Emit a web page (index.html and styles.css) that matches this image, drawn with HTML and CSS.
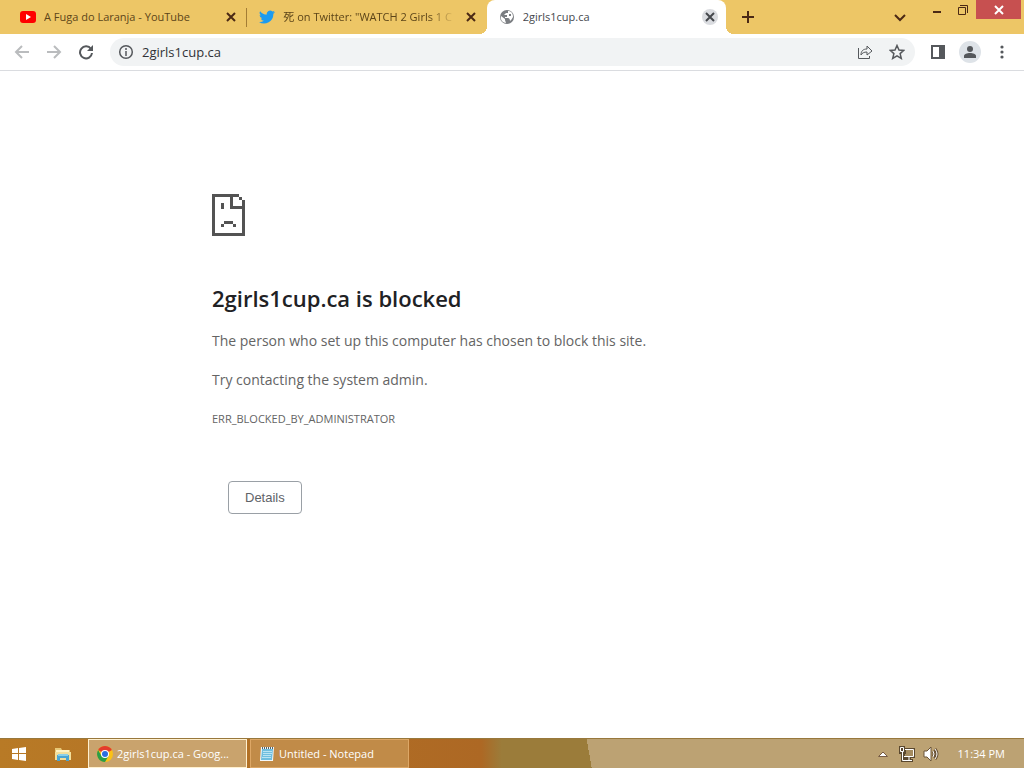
FILE: index.html
```
<!DOCTYPE html>
<html lang="en">
<head>
    <meta charset="UTF-8">
    <meta name="viewport" content="width=device-width, initial-scale=1.0">
    <title>2girls1cup.ca</title>
    <link rel="stylesheet" href="styles.css">
</head>
<body>
    <header class="tabstrip">
        <div class="tabs">
            <div class="tab divided">
                <svg class="favicon" viewBox="0 0 16 16"><rect y="2" width="16" height="12" rx="3" fill="#f00"/><path d="M6 5l5 3-5 3z" fill="#fff"/></svg>
                <span class="tab-title">A Fuga do Laranja - YouTube</span>
                <button class="tab-close" aria-label="Close tab"><svg viewBox="0 0 16 16"><path d="M4 4l8 8M12 4l-8 8"/></svg></button>
            </div>
            <div class="tab">
                <svg class="favicon" viewBox="0 0 24 24"><path fill="#1d9bf0" d="M24 4.6a10 10 0 0 1-2.8.8 5 5 0 0 0 2.1-2.7 10 10 0 0 1-3.100 1.200 4.900 4.900 0 0 0-8.400 4.500A14 14 0 0 1 1.700 3.200a4.900 4.900 0 0 0 1.500 6.500 4.900 4.900 0 0 1-2.200-.6 4.900 4.900 0 0 0 3.900 4.900 5 5 0 0 1-2.200.1 4.900 4.900 0 0 0 4.600 3.400A9.900 9.900 0 0 1 0 19.500 14 14 0 0 0 21.500 7.100 10 10 0 0 0 24 4.600z"/></svg>
                <span class="tab-title fade">死 on Twitter: "WATCH 2 Girls 1 C</span>
                <button class="tab-close" aria-label="Close tab"><svg viewBox="0 0 16 16"><path d="M4 4l8 8M12 4l-8 8"/></svg></button>
            </div>
            <div class="tab active">
                <svg class="favicon" viewBox="0 0 16 16"><circle cx="8" cy="8" r="7" fill="#7b7e82"/><path d="M2 7l4 3v1l1 3C4 14 1 11 2 7zM9 2c3 0 5 2 5 6-1 2-2 3-3 4 0-2-1-3-2-3H6V8h2V6H5l2-2h2z" fill="#fff"/><path d="M10 5h2v2h-2z" fill="#7b7e82"/></svg>
                <span class="tab-title">2girls1cup.ca</span>
                <button class="tab-close" aria-label="Close tab"><svg viewBox="0 0 16 16"><path d="M4 4l8 8M12 4l-8 8"/></svg></button>
            </div>
        </div>
        <button class="new-tab" aria-label="New tab"><svg viewBox="0 0 16 16"><path d="M8 2v12M2 8h12"/></svg></button>
        <div class="window-controls">
            <button class="search-tabs" aria-label="Search tabs"><svg viewBox="0 0 16 16"><path d="M3 6l5 5 5-5"/></svg></button>
            <button class="minimize" aria-label="Minimize"><svg viewBox="0 0 16 16"><path d="M4 10h8"/></svg></button>
            <button class="restore" aria-label="Restore"><svg viewBox="0 0 16 16"><path d="M3.500 5.500h7v7h-7zM5 3.500h7.500V11"/></svg></button>
            <button class="close" aria-label="Close"><svg viewBox="0 0 16 16"><path d="M4 4l8 8M12 4l-8 8"/></svg></button>
        </div>
    </header>

    <nav class="toolbar">
        <button class="nav-btn disabled" aria-label="Back"><svg viewBox="0 0 16 16"><path d="M15 8H2M8 2L2 8l6 6"/></svg></button>
        <button class="nav-btn disabled" aria-label="Forward"><svg viewBox="0 0 16 16"><path d="M1 8h13M8 2l6 6-6 6"/></svg></button>
        <button class="nav-btn" aria-label="Reload"><svg viewBox="0 0 16 16"><path d="M13 5a6 6 0 1 0 1 4"/><path d="M15 1v6H9z" fill="#55585c" stroke="none"/></svg></button>
        <div class="omnibox">
            <svg class="info" viewBox="0 0 16 16"><circle cx="8" cy="8" r="6.300"/><path d="M8 7v5M8 4v2"/></svg>
            <input type="text" value="2girls1cup.ca" aria-label="Address">
            <button class="nav-btn thin share" aria-label="Share"><svg viewBox="0 0 16 16"><path d="M1.500 4v10.500h11V12"/><path d="M4 11c0-4 2-6 6-6V2l5 5-5 4V8c-3 0-5 1-6 3z"/></svg></button>
            <button class="nav-btn thin" aria-label="Bookmark"><svg viewBox="0 0 16 16"><path d="M8 1.500l2 4.500 4.800.4-3.700 3.200 1.200 4.800L8 11.800l-4.300 2.600 1.200-4.800L1.200 6.400 6 6z"/></svg></button>
        </div>
        <button class="nav-btn" aria-label="Side panel"><svg viewBox="0 0 16 16"><path d="M2 2h12v12H2z"/><path d="M10 2h4v12h-4z" fill="#55585c"/></svg></button>
        <button class="nav-btn avatar" aria-label="Profile"><svg viewBox="0 0 16 16"><circle cx="8" cy="5" r="3"/><path d="M2 14v-2c0-4 12-4 12 0v2z"/></svg></button>
        <button class="nav-btn menu" aria-label="Menu"><svg viewBox="0 0 16 16"><circle cx="8" cy="3" r="1.600"/><circle cx="8" cy="8" r="1.600"/><circle cx="8" cy="13" r="1.600"/></svg></button>
    </nav>

    <main>
        <div class="error-page">
            <svg class="sad-page" viewBox="0 0 11 14"><path d="M0 0h9v1H7v3h3V2h1v12H0zM1 1v12h9V5H6V1zM9 1h1v1H9zM3 3h1v2H3zM4 9h3v1H4zM3 10h1v1H3zM7 10h1v1H7z" fill="#535353" fill-rule="evenodd"/></svg>
            <h1>2girls1cup.ca is blocked</h1>
            <p>The person who set up this computer has chosen to block this site.</p>
            <p>Try contacting the system admin.</p>
            <div class="error-code">ERR_BLOCKED_BY_ADMINISTRATOR</div>
            <button class="details">Details</button>
        </div>
    </main>

    <footer class="taskbar">
        <button class="launcher" aria-label="Start"><svg viewBox="0 0 16 16"><path d="M1 3l6-1v5H1zM8 2l7-1v6H8zM1 8h6v6l-6-1zM8 8h7v7l-7-1z" fill="#fff"/></svg></button>
        <button class="launcher explorer" aria-label="File Explorer"><svg viewBox="0 0 16 16"><path d="M0 2h6l1 2h8v10H0z" fill="#e8c877"/><path d="M1 4h13v3H1z" fill="#fff3c4"/><path d="M0 6h16v8H0z" fill="#f3df9b"/><path d="M2 9h12v6h-3v-3H5v3H2z" fill="#4aa5d3"/><path d="M3 8h10v2H3z" fill="#8bd0e8"/></svg></button>
        <button class="task current">
            <svg viewBox="0 0 16 16"><circle cx="8" cy="8" r="8" fill="#fbc116"/><path d="M8 8L1.100 4A8 8 0 0 1 14.900 4z" fill="#e33b2e"/><path d="M1.100 4A8 8 0 0 0 8 16l3.500-6H8L4.500 10z" fill="#2a9d48"/><circle cx="8" cy="8" r="4" fill="#fff"/><circle cx="8" cy="8" r="3" fill="#2b6de0"/></svg>
            <span>2girls1cup.ca - Goog...</span>
        </button>
        <button class="task">
            <svg viewBox="0 0 16 16"><path d="M2 1h13l-1 14H1z" fill="#f4f8fa"/><path d="M3 3h11l-1 11H2z" fill="#6fbede"/><path d="M4 5.500h9M4 7.500h9M4 9.500h8M3 11.500h9" stroke="#b9e4f2"/><path d="M3.500 1v2M5.500 1v2M7.500 1v2M9.500 1v2M11.500 1v2M13.500 1v2" stroke="#53636b"/></svg>
            <span>Untitled - Notepad</span>
        </button>
        <div class="tray">
            <svg class="arrow" viewBox="0 0 16 16"><path d="M3.500 10.500L8 6l4.500 4.500z" fill="#fff" stroke="#765b45"/></svg>
            <svg viewBox="0 0 16 16"><path d="M0 0h6v2h10v10h-4v1h2v3H2V8H0z" fill="#5a482f"/><path d="M7 4h7v6H6V8h1z" fill="#a58c60"/><path d="M6 3.500h8.500v7H5M10 11v3M5 14.500h8M3.500 6v8.500h2M1.500 1.500h3v4h-3z" stroke="#fff" fill="none"/></svg>
            <svg viewBox="0 0 16 16"><path d="M1 5h3l4-4v14l-4-4H1z" fill="#fff" stroke="#6b5438"/><path d="M10 5q2 3 0 6M12 3q4 5 0 10" stroke="#6b5438" stroke-width="3" fill="none"/><path d="M10 5q2 3 0 6M12 3q4 5 0 10" stroke="#fff" fill="none"/></svg>
            <time>11:34 PM</time>
        </div>
    </footer>
</body>
</html>
```
FILE: styles.css
```
* {
    box-sizing: border-box;
}

body {
    margin: 0;
    min-height: 100vh;
    display: flex;
    flex-direction: column;
    font-family: "Open Sans", "Noto Sans CJK JP", sans-serif;
    font-size: 11px;
    background-color: #fff;
}

button {
    padding: 0;
    border: none;
    background: none;
    font-family: inherit;
    display: flex;
    align-items: center;
    justify-content: center;
    flex-shrink: 0;
}

svg {
    width: 16px;
    height: 16px;
    flex-shrink: 0;
}

/* Tabs */
.tabstrip {
    display: flex;
    height: 34px;
    background-color: #edc666;
    padding-left: 8px;
}

.tabs {
    display: flex;
    flex: 0 1 718px;
    min-width: 0;
}

.tab {
    flex: 1;
    min-width: 0;
    display: flex;
    align-items: center;
    gap: 8px;
    padding: 0 8px 0 12px;
    color: #5c4519;
    position: relative;
}

.tab.divided::after {
    content: "";
    position: absolute;
    right: 0;
    top: 8px;
    height: 19px;
    border-right: 1px solid #a37d35;
}

.tab-title {
    flex: 1;
    min-width: 0;
    overflow: hidden;
    white-space: nowrap;
    line-height: 20px;
}

.tab-title.fade {
    -webkit-mask-image: linear-gradient(to right, #000 85%, transparent);
    mask-image: linear-gradient(to right, #000 85%, transparent);
}

.tab.active {
    background-color: #fff;
    border-radius: 8px 8px 0 0;
    color: #45484c;
}

.tab.active::before,
.tab.active::after {
    content: "";
    position: absolute;
    bottom: 0;
    width: 8px;
    height: 8px;
}

.tab.active::before {
    left: -8px;
    background: radial-gradient(circle at 0 0, transparent 8px, #fff 8px);
}

.tab.active::after {
    right: -8px;
    background: radial-gradient(circle at 100% 0, transparent 8px, #fff 8px);
}

.tab-close {
    width: 16px;
    height: 16px;
    border-radius: 50%;
}

.tab-close svg,
.new-tab svg,
.window-controls svg {
    fill: none;
    stroke: #4b2915;
    stroke-width: 2;
}

.active .tab-close {
    background-color: #dadce0;
}

.active .tab-close svg {
    stroke: #45484c;
}

.new-tab {
    width: 28px;
    margin-left: 8px;
}

.window-controls {
    display: flex;
    align-items: flex-start;
    margin-left: auto;
}

.window-controls button {
    width: 26px;
    height: 19px;
}

.window-controls .search-tabs {
    width: 48px;
    height: 34px;
}

.window-controls .restore svg {
    stroke-width: 1;
}

.window-controls .close {
    width: 45px;
    background-color: #c75050;
    margin-right: 3px;
}

.window-controls .close svg {
    stroke: #fff;
}

/* Toolbar */
.toolbar {
    display: flex;
    align-items: center;
    height: 37px;
    padding: 0 8px;
    border-bottom: 1px solid #dadce0;
}

.nav-btn {
    width: 28px;
    height: 28px;
    margin-right: 4px;
}

.nav-btn svg,
.info {
    fill: none;
    stroke: #55585c;
    stroke-width: 2;
}

.nav-btn.disabled svg {
    stroke: #babcbe;
}

.nav-btn.thin svg,
.info {
    stroke-width: 1.5;
}

.nav-btn.share svg {
    stroke-width: 1;
}

.omnibox {
    flex: 1;
    min-width: 0;
    display: flex;
    align-items: center;
    height: 28px;
    margin: 0 9px 0 6px;
    padding-left: 8px;
    border-radius: 14px;
    background-color: #f1f3f4;
}

.omnibox input {
    flex: 1;
    min-width: 0;
    margin-left: 8px;
    padding: 0;
    border: none;
    outline: none;
    background: none;
    font-family: inherit;
    font-size: 13px;
    color: #303236;
}

.nav-btn.avatar {
    width: 22px;
    height: 22px;
    margin: 0 7px 0 3px;
    border-radius: 50%;
    background-color: #dee3e8;
}

.avatar svg,
.menu svg {
    fill: #55585c;
    stroke: none;
}

.nav-btn.menu {
    margin-right: 0;
}

/* Error page */
main {
    flex: 1;
    padding: 123px 24px 24px;
}

.error-page {
    max-width: 600px;
    margin: 0 auto;
    color: #646464;
}

.sad-page {
    display: block;
    width: 33px;
    height: 42px;
    shape-rendering: crispEdges;
}

h1 {
    margin: 47px 0 16px;
    font-size: 22px;
    line-height: 30px;
    font-weight: 600;
    color: #202124;
}

p {
    margin: 0 0 15px;
    font-size: 14px;
    line-height: 24px;
}

.error-code {
    line-height: 24px;
}

.details {
    margin: 50px 0 0 16px;
    padding: 0 16px;
    height: 33px;
    border: 1px solid #9aa0a6;
    border-radius: 4px;
    font-family: "Liberation Sans", sans-serif;
    font-size: 13px;
    color: #5f6368;
}

/* Taskbar */
.taskbar {
    display: flex;
    height: 30px;
    background: linear-gradient(80deg, transparent 57.5%, #bca273 57.5%), linear-gradient(to right, #b87a26 0, #ad6824 47%, #9b7c3a 49%);
    border-top: 1px solid #98783c;
    color: #fff;
}

.launcher {
    width: 38px;
}

.launcher.explorer {
    width: 50px;
}

.task {
    width: 159px;
    margin-right: 3px;
    padding: 0 8px;
    gap: 4px;
    justify-content: flex-start;
    border: 1px solid #dda766;
    background-color: #c18b48;
    color: #fff;
    font-size: 11px;
    white-space: nowrap;
}

.task.current {
    border-color: #fff0cf;
    background-color: #c9a36d;
}

.tray {
    display: flex;
    align-items: center;
    gap: 8px;
    margin-left: auto;
    padding-right: 19px;
}

.tray time {
    margin-left: 11px;
}
```
